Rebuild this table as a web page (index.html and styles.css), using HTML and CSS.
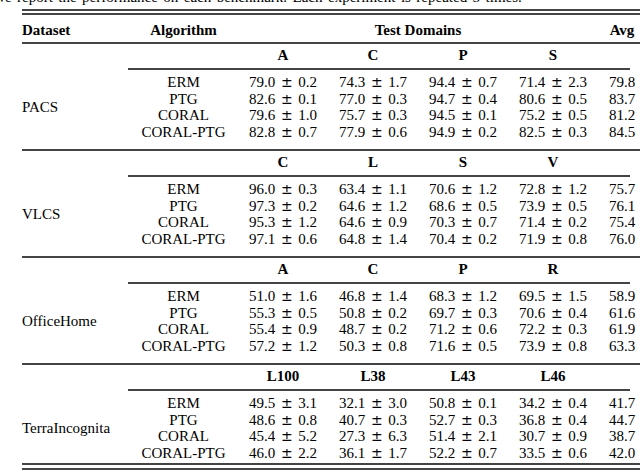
FILE: index.html
```html
<!DOCTYPE html>
<html>
<head>
<meta charset="utf-8">
<link rel="stylesheet" href="styles.css">
</head>
<body>
<p class="caption">We report the performance on each benchmark. Each experiment is repeated 5 times.</p>
<div class="table">
  <div class="toprule"></div>
  <div class="toprule second"></div>
  <div class="head">
    <div class="c-left">Dataset</div>
    <div class="c-center">Algorithm</div>
    <div class="c-center span4">Test Domains</div>
    <div class="c-center">Avg</div>
  </div>

  <div class="block">
    <div class="blank"></div>
    <div class="sub">A</div><div class="sub">C</div><div class="sub">P</div><div class="sub">S</div><div class="sub"></div>
    <div class="cmid"></div>
    <div class="dataset">PACS</div>
    <div class="alg">ERM</div><div class="val">79.0<span class="pm">±</span>0.2</div><div class="val">74.3<span class="pm">±</span>1.7</div><div class="val">94.4<span class="pm">±</span>0.7</div><div class="val">71.4<span class="pm">±</span>2.3</div><div class="val">79.8</div>
    <div class="alg">PTG</div><div class="val">82.6<span class="pm">±</span>0.1</div><div class="val">77.0<span class="pm">±</span>0.3</div><div class="val">94.7<span class="pm">±</span>0.4</div><div class="val">80.6<span class="pm">±</span>0.5</div><div class="val">83.7</div>
    <div class="alg">CORAL</div><div class="val">79.6<span class="pm">±</span>1.0</div><div class="val">75.7<span class="pm">±</span>0.3</div><div class="val">94.5<span class="pm">±</span>0.1</div><div class="val">75.2<span class="pm">±</span>0.5</div><div class="val">81.2</div>
    <div class="alg">CORAL-PTG</div><div class="val">82.8<span class="pm">±</span>0.7</div><div class="val">77.9<span class="pm">±</span>0.6</div><div class="val">94.9<span class="pm">±</span>0.2</div><div class="val">82.5<span class="pm">±</span>0.3</div><div class="val">84.5</div>
  </div>

  <div class="block">
    <div class="blank"></div>
    <div class="sub">C</div><div class="sub">L</div><div class="sub">S</div><div class="sub">V</div><div class="sub"></div>
    <div class="cmid"></div>
    <div class="dataset">VLCS</div>
    <div class="alg">ERM</div><div class="val">96.0<span class="pm">±</span>0.3</div><div class="val">63.4<span class="pm">±</span>1.1</div><div class="val">70.6<span class="pm">±</span>1.2</div><div class="val">72.8<span class="pm">±</span>1.2</div><div class="val">75.7</div>
    <div class="alg">PTG</div><div class="val">97.3<span class="pm">±</span>0.2</div><div class="val">64.6<span class="pm">±</span>1.2</div><div class="val">68.6<span class="pm">±</span>0.5</div><div class="val">73.9<span class="pm">±</span>0.5</div><div class="val">76.1</div>
    <div class="alg">CORAL</div><div class="val">95.3<span class="pm">±</span>1.2</div><div class="val">64.6<span class="pm">±</span>0.9</div><div class="val">70.3<span class="pm">±</span>0.7</div><div class="val">71.4<span class="pm">±</span>0.2</div><div class="val">75.4</div>
    <div class="alg">CORAL-PTG</div><div class="val">97.1<span class="pm">±</span>0.6</div><div class="val">64.8<span class="pm">±</span>1.4</div><div class="val">70.4<span class="pm">±</span>0.2</div><div class="val">71.9<span class="pm">±</span>0.8</div><div class="val">76.0</div>
  </div>

  <div class="block">
    <div class="blank"></div>
    <div class="sub">A</div><div class="sub">C</div><div class="sub">P</div><div class="sub">R</div><div class="sub"></div>
    <div class="cmid"></div>
    <div class="dataset">OfficeHome</div>
    <div class="alg">ERM</div><div class="val">51.0<span class="pm">±</span>1.6</div><div class="val">46.8<span class="pm">±</span>1.4</div><div class="val">68.3<span class="pm">±</span>1.2</div><div class="val">69.5<span class="pm">±</span>1.5</div><div class="val">58.9</div>
    <div class="alg">PTG</div><div class="val">55.3<span class="pm">±</span>0.5</div><div class="val">50.8<span class="pm">±</span>0.2</div><div class="val">69.7<span class="pm">±</span>0.3</div><div class="val">70.6<span class="pm">±</span>0.4</div><div class="val">61.6</div>
    <div class="alg">CORAL</div><div class="val">55.4<span class="pm">±</span>0.9</div><div class="val">48.7<span class="pm">±</span>0.2</div><div class="val">71.2<span class="pm">±</span>0.6</div><div class="val">72.2<span class="pm">±</span>0.3</div><div class="val">61.9</div>
    <div class="alg">CORAL-PTG</div><div class="val">57.2<span class="pm">±</span>1.2</div><div class="val">50.3<span class="pm">±</span>0.8</div><div class="val">71.6<span class="pm">±</span>0.5</div><div class="val">73.9<span class="pm">±</span>0.8</div><div class="val">63.3</div>
  </div>

  <div class="block last">
    <div class="blank"></div>
    <div class="sub">L100</div><div class="sub">L38</div><div class="sub">L43</div><div class="sub">L46</div><div class="sub"></div>
    <div class="cmid"></div>
    <div class="dataset">TerraIncognita</div>
    <div class="alg">ERM</div><div class="val">49.5<span class="pm">±</span>3.1</div><div class="val">32.1<span class="pm">±</span>3.0</div><div class="val">50.8<span class="pm">±</span>0.1</div><div class="val">34.2<span class="pm">±</span>0.4</div><div class="val">41.7</div>
    <div class="alg">PTG</div><div class="val">48.6<span class="pm">±</span>0.8</div><div class="val">40.7<span class="pm">±</span>0.3</div><div class="val">52.7<span class="pm">±</span>0.3</div><div class="val">36.8<span class="pm">±</span>0.4</div><div class="val">44.7</div>
    <div class="alg">CORAL</div><div class="val">45.4<span class="pm">±</span>5.2</div><div class="val">27.3<span class="pm">±</span>6.3</div><div class="val">51.4<span class="pm">±</span>2.1</div><div class="val">30.7<span class="pm">±</span>0.9</div><div class="val">38.7</div>
    <div class="alg">CORAL-PTG</div><div class="val">46.0<span class="pm">±</span>2.2</div><div class="val">36.1<span class="pm">±</span>1.7</div><div class="val">52.2<span class="pm">±</span>0.7</div><div class="val">33.5<span class="pm">±</span>0.6</div><div class="val">42.0</div>
  </div>

  <div class="bottomrule"></div>
  <div class="bottomrule second"></div>
</div>
</body>
</html>
```

FILE: styles.css
```css
html, body {
  margin: 0;
  padding: 0;
  background: #fff;
  overflow: hidden;
}

body {
  width: 640px;
  height: 474px;
  font-family: "Liberation Serif", "Times New Roman", serif;
  font-size: 15px;
  line-height: 16.5px;
  color: #000;
}

.caption {
  margin: -11px 0 0 -8px;
  height: 16.5px;
  white-space: nowrap;
  word-spacing: 1.7px;
}

.table {
  --cols: 107px 109px 90px 90px 90px 90px 48px;
  width: 624px;
  margin: 3.5px 0 0 22px;
}

.toprule,
.bottomrule {
  height: 2px;
  background: #444;
}

.toprule.second {
  margin-top: 2px;
}

.bottomrule.second {
  margin-top: 3px;
}

.head {
  display: grid;
  grid-template-columns: var(--cols);
  padding: 6.5px 0 4px;
  font-weight: bold;
}

.c-left {
  text-align: left;
}

.c-center {
  text-align: center;
}

.span4 {
  grid-column: span 4;
}

.block {
  display: grid;
  grid-template-columns: var(--cols);
  border-top: 2px solid #444;
  padding: 3px 0 9px;
}

.block.last {
  padding-bottom: 2px;
}

.blank {
  grid-column: 1 / 3;
}

.sub {
  font-weight: bold;
  text-align: center;
  height: 16.5px;
}

.cmid {
  grid-row: 2;
  grid-column: 2 / -1;
  height: 2px;
  background: #444;
  margin: 4.5px 16px 4px -1px;
}

.dataset {
  grid-column: 1;
  grid-row: 3 / span 4;
  align-self: center;
  white-space: nowrap;
}

.alg {
  grid-column: 2;
  text-align: center;
  white-space: nowrap;
}

.val {
  text-align: center;
  white-space: nowrap;
}

.pm {
  display: inline-block;
  width: 13px;
  margin: 0 5px;
  text-align: center;
  font-family: "DejaVu Serif", serif;
  font-size: 14px;
}
```
